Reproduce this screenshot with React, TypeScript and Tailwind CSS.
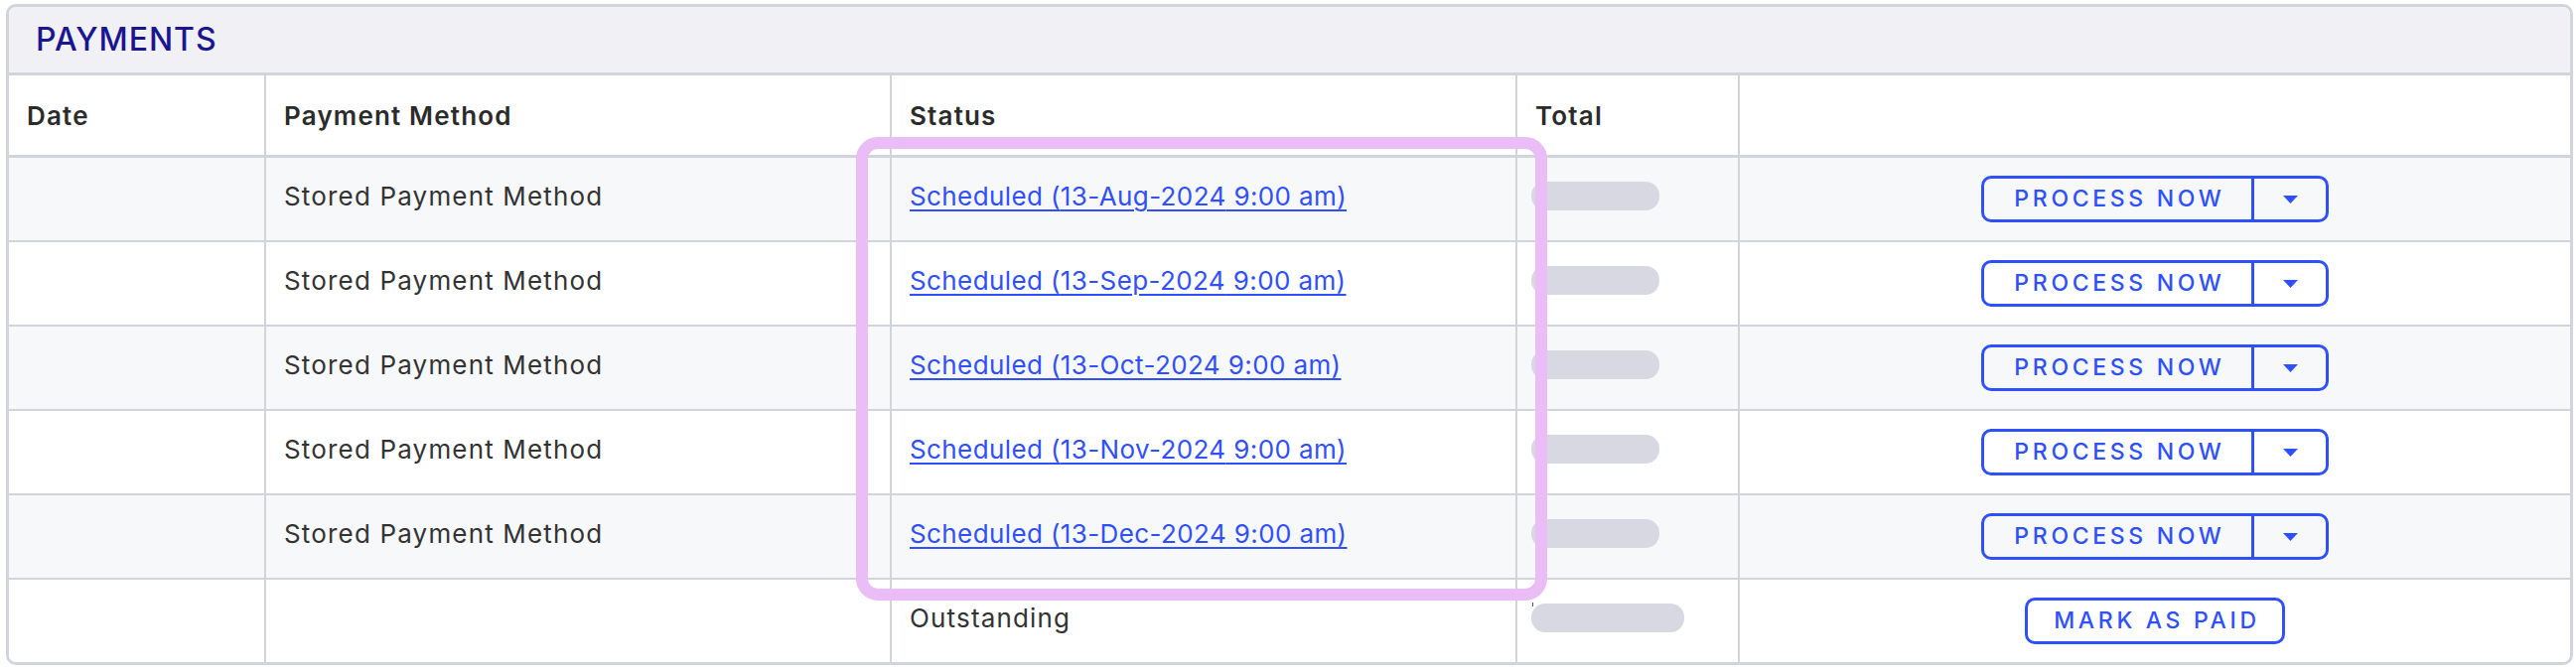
import React from "react"

const rows = ["13-Aug-2024", "13-Sep-2024", "13-Oct-2024", "13-Nov-2024", "13-Dec-2024"]

function Caret() {
    return (
        <svg width="15" height="8" viewBox="0 0 15 8">
            <path d="M0 0 H15 L7.5 8 Z" fill="#2f50ff" />
        </svg>
    )
}

function ProcessButton() {
    return (
        <div className="flex h-[47px] w-[350px] rounded-[10px] border-[3px] border-[#2f50ff] text-[#2f50ff]">
            <span className="flex w-[272px] items-center justify-center border-r-[3px] border-[#2f50ff] pl-[4px] text-[23px] font-medium tracking-[0.16em]">
                PROCESS NOW
            </span>
            <span className="flex flex-1 items-center justify-center">
                <Caret />
            </span>
        </div>
    )
}

export default function App() {
    const cell = "flex items-center border-r-[2px] border-[#d1d5db] pl-[18px]"
    return (
        <div className="relative h-[677px] w-[2594px] bg-white pl-[6px] pt-[4px] font-['Inter','Liberation_Sans',sans-serif] text-[26px] tracking-[0.045em] text-[#333]">
            <div className="w-[2585px] overflow-hidden rounded-[10px] border-[3px] border-[#d1d5db]">
                <div className="flex h-[69px] items-center border-b-[3px] border-[#d1d5db] bg-[#f0f0f5] pl-[27px] text-[32px] font-medium tracking-[0.03em] text-[#1a1690]">
                    PAYMENTS
                </div>

                <div className="grid h-[83px] grid-cols-[259px_630px_630px_224px_1fr] border-b-[3px] border-[#d1d5db] bg-white font-semibold text-[#2b2b2b]">
                    <div className={cell}>Date</div>
                    <div className={cell}>Payment Method</div>
                    <div className={cell}>Status</div>
                    <div className={cell}>Total</div>
                    <div />
                </div>

                {rows.map((d, i) => (
                    <div
                        key={d}
                        className={`grid h-[85px] grid-cols-[259px_630px_630px_224px_1fr] border-b-[2px] border-[#d1d5db] ${i % 2 === 0 ? "bg-[#f7f8fa]" : "bg-white"}`}
                    >
                        <div className={cell} />
                        <div className={`${cell} pb-[6px]`}>Stored Payment Method</div>
                        <div className={`${cell} pb-[6px]`}>
                            <a href="#" className="tracking-[0.015em] text-[#3050ff] underline decoration-[2px] underline-offset-[4px]">
                                Scheduled ({d} 9:00 am)
                            </a>
                        </div>
                        <div className="flex items-center border-r-[2px] border-[#d1d5db] pb-[6px] pl-[14px]">
                            <div className="h-[29px] w-[129px] rounded-[14px] bg-[#d8d8e3]" />
                        </div>
                        <div className="flex items-center justify-center tracking-normal">
                            <ProcessButton />
                        </div>
                    </div>
                ))}

                <div className="grid h-[83px] grid-cols-[259px_630px_630px_224px_1fr] bg-white">
                    <div className={cell} />
                    <div className={cell} />
                    <div className={`${cell} pb-[6px]`}>Outstanding</div>
                    <div className="relative flex items-center border-r-[2px] border-[#d1d5db] pb-[6px] pl-[14px]">
                        <span className="absolute left-[15px] top-[23px] h-[4px] w-[1px] bg-[#555]" />
                        <div className="h-[29px] w-[154px] rounded-[14px] bg-[#d8d8e3]" />
                    </div>
                    <div className="flex items-center justify-center">
                        <button className="h-[47px] w-[262px] rounded-[10px] border-[3px] border-[#2f50ff] pl-[4px] text-[23px] font-medium tracking-[0.16em] text-[#2f50ff]">
                            MARK AS PAID
                        </button>
                    </div>
                </div>
            </div>

            {/* highlight around the scheduled statuses */}
            <div className="pointer-events-none absolute left-[862px] top-[138px] h-[467px] w-[696px] rounded-[22px] border-[12px] border-[#ebbdf7]" />
        </div>
    )
}
